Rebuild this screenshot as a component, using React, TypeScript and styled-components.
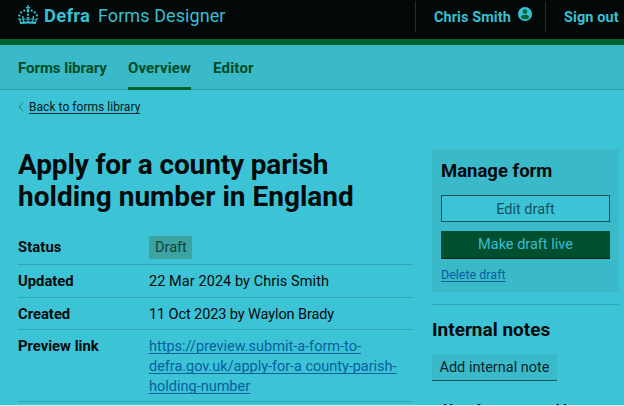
import React from 'react';
import styled, { createGlobalStyle } from 'styled-components';

const c = {
  page: '#3cc4d6',
  panel: '#3ab9c9',
  ink: '#04090b',
  line: '#2fa5b6',
  green: '#00622f',
  navText: '#004d27',
  link: '#06609f',
};

const GlobalStyle = createGlobalStyle`
  *, *::before, *::after { box-sizing: border-box; }
  body { margin: 0; background: #d3f0f5; overflow: hidden; }
`;

const Page = styled.div`
  width: 624px;
  height: 405px;
  overflow: hidden;
  background: ${c.page};
  color: ${c.ink};
  font-family: Roboto, 'Liberation Sans', sans-serif;
  font-size: 14.5px;
  line-height: 20px;
  white-space: nowrap;
`;

/* Text run with optional tracking */
const Run = styled.span<{ $track?: number }>`
  letter-spacing: ${(p) => p.$track ?? 0}px;
`;

const Header = styled.header`
  display: flex;
  height: 45px;
  padding-left: 18px;
  background: #020808;
  border-bottom: 6px solid ${c.green};
  color: #38bfd1;
`;

const Brand = styled.div`
  display: flex;
  flex: 1;
  height: 32px;
  font-size: 18px;
  line-height: 32px;
`;

const Crown = styled.svg`
  width: 20px;
  height: 19px;
  margin: 5px 6px 0 0;
  fill: currentColor;
`;

const BrandName = styled.strong`
  width: 54px;
  font-size: 18.5px;
  font-weight: 700;
`;

const Account = styled.div<{ $width: number }>`
  display: flex;
  width: ${(p) => p.$width}px;
  height: 31px;
  margin-top: 1px;
  padding-left: 18px;
  border-left: 1px solid #1b3338;
  font-weight: 700;
  line-height: 33px;
`;

const Avatar = styled.svg`
  width: 14px;
  height: 14px;
  margin: 6px 0 0 7px;
`;

const Nav = styled.nav`
  display: flex;
  gap: 22px;
  height: 45px;
  padding-left: 18px;
  background: ${c.panel};
  border-bottom: 1px solid #2f9fb0;
`;

const NavItem = styled.a<{ $active?: boolean; $width: number }>`
  width: ${(p) => p.$width}px;
  height: 45px;
  padding-top: 13px;
  border-bottom: 3px solid ${(p) => (p.$active ? c.green : 'transparent')};
  color: ${c.navText};
  font-size: 15px;
  font-weight: 700;
`;

const BackRow = styled.div`
  display: flex;
  align-items: center;
  height: 34px;
  padding-left: 18px;
`;

const Chevron = styled.svg`
  width: 6px;
  height: 10px;
  margin-right: 5px;
  fill: none;
  stroke: #237a88;
`;

const BackLink = styled.a`
  height: 14px;
  border-bottom: 1px solid #0b2c33;
  color: #06181c;
  font-size: 12px;
  letter-spacing: 0.04px;
  line-height: 15px;
`;

const Columns = styled.div`
  display: grid;
  grid-template-columns: 395px 187px;
  column-gap: 19px;
  padding: 25px 0 0 18px;
`;

const Title = styled.h1`
  margin: 0 0 17px;
  font-size: 28px;
  font-weight: 700;
  line-height: 31.5px;
`;

const Summary = styled.dl`
  margin: 0;
`;

const SummaryRow = styled.div<{ $height: number; $top: number }>`
  display: grid;
  grid-template-columns: 131px 1fr;
  height: ${(p) => p.$height}px;
  padding-top: ${(p) => p.$top}px;
  border-bottom: 1px solid ${c.line};
`;

const Key = styled.dt`
  font-weight: 700;
  font-size: 14.8px;
`;

const Value = styled.dd`
  margin: 0;
  padding-top: 1px;
`;

const Tag = styled.span`
  display: flex;
  width: 43px;
  height: 23px;
  margin-top: -2px;
  padding-left: 6px;
  background: #3ca3a0;
  color: #0c4640;
  line-height: 23px;
`;

const Link = styled.a<{ $size?: number }>`
  color: ${c.link};
  font-size: ${(p) => p.$size ?? 14.5}px;
  text-decoration: underline;
  text-decoration-thickness: 1px;
  text-decoration-skip-ink: none;
  text-underline-offset: 2px;
`;

const Panel = styled.section`
  height: 143px;
  padding: 12px 9px 0;
  background: ${c.panel};
`;

const PanelTitle = styled.h2`
  margin: 0 0 14px;
  font-size: 18.5px;
  font-weight: 700;
  line-height: 20px;
`;

const Button = styled.button<{ $primary?: boolean }>`
  display: block;
  width: 169px;
  height: ${(p) => (p.$primary ? 28 : 27)}px;
  margin: 0 0 ${(p) => (p.$primary ? 6 : 9)}px;
  padding: 1px 0 0;
  border: ${(p) => (p.$primary ? '0' : '1px solid #135059')};
  border-bottom: 1px solid ${(p) => (p.$primary ? '#012213' : '#135059')};
  border-radius: 0;
  background: ${(p) => (p.$primary ? '#005030' : c.page)};
  color: ${(p) => (p.$primary ? '#3bbfd0' : '#12525c')};
  font: inherit;
  line-height: 26px;
`;

const Notes = styled.section`
  margin-top: 12px;
  padding-top: 15px;
  border-top: 1px solid ${c.line};
`;

const NotesTitle = styled(PanelTitle)`
  font-size: 19px;
`;

const NoteButton = styled.button`
  display: block;
  width: 125px;
  height: 27px;
  padding: 1px 0 0;
  border: 0;
  border-bottom: 1px solid #14545e;
  border-radius: 0;
  background: ${c.panel};
  color: #07262c;
  font: inherit;
  line-height: 26px;
`;

const NoteEntry = styled.p`
  margin: 20px 0 0 11px;
  font-weight: 700;
`;

export default function App() {
  return (
    <Page>
      <GlobalStyle />
      <Header>
        <Brand>
          <Crown viewBox="0 0 32 30" aria-hidden="true">
            <path d="M22.6 10.4c-1 .4-2-.1-2.4-1-.4-.9.1-2 1-2.4.9-.4 2 .1 2.4 1s-.1 2-1 2.4m-5.9 6.7c-.9.4-2-.1-2.4-1-.4-.9.1-2 1-2.4.9-.4 2 .1 2.4 1s-.1 2-1 2.4m10.8-3.7c-1 .4-2-.1-2.4-1-.4-.9.1-2 1-2.4.9-.4 2 .1 2.4 1s0 2-1 2.4m3.3 4.8c-1 .4-2-.1-2.4-1-.4-.9.1-2 1-2.4.9-.4 2 .1 2.4 1s-.1 2-1 2.4M17 4.7l2.3 1.2V2.5l-2.3.7-.2-.2.9-3h-3.4l.9 3-.2.2c-.1.1-2.3-.7-2.3-.7v3.4L15 4.7c.1.1.1.2.2.2l-1.3 4c-.1.2-.1.4-.1.6 0 1.1.8 2 1.9 2.2h.7c1-.2 1.9-1.1 1.9-2.1 0-.2 0-.4-.1-.6l-1.3-4c-.1-.2 0-.2.1-.3m-7.6 5.7c.9.4 2-.1 2.4-1 .4-.9-.1-2-1-2.4-.9-.4-2 .1-2.4 1s0 2 1 2.4m-5 3c.9.4 2-.1 2.4-1 .4-.9-.1-2-1-2.4-.9-.4-2 .1-2.4 1s.1 2 1 2.4m-3.2 4.8c.9.4 2-.1 2.4-1 .4-.9-.1-2-1-2.4-.9-.4-2 .1-2.4 1s0 2 1 2.4m14.8 11c4.4 0 8.6.3 12.3.8 1.1-4.5 2.4-7 3.7-8.8l-2.5-.9c.2 1.3.3 1.9 0 2.7-.4-.4-.8-1.1-1.1-2.3l-1.2 4c.7-.5 1.3-.8 2-.9-1.1 2.5-2.6 3.1-3.5 3-1.1-.2-1.7-1.2-1.5-2.1.3-1.2 1.5-1.5 2.1-.1 1.1-2.3-.8-3-2-2.3 1.9-1.9 2.1-3.5.6-5.6-2.1 1.6-2.1 3.2-1.2 5.5-1.2-1.4-3.2-.6-2.5 1.6.9-1.4 2.1-.5 1.9.8-.2 1.1-1.7 2.1-3.5 1.9-2.7-.2-2.9-2.1-2.9-3.6.7-.1 1.9.5 2.9 1.9l.4-4.3c-1.1 1.1-2.1 1.4-3.2 1.4.4-1.2 2.1-3 2.1-3h-5.4s1.7 1.9 2.1 3c-1.1 0-2.1-.2-3.2-1.4l.4 4.3c1-1.4 2.2-2 2.9-1.9-.1 1.5-.2 3.4-2.9 3.6-1.9.2-3.4-.8-3.5-1.9-.2-1.3 1-2.2 1.9-.8.7-2.3-1.2-3-2.5-1.6.9-2.2.9-3.9-1.2-5.5-1.5 2-1.3 3.7.6 5.6-1.2-.7-3.1 0-2 2.3.6-1.4 1.8-1.1 2.1.1.2.9-.3 1.9-1.5 2.1-.9.2-2.4-.5-3.5-3 .6 0 1.2.3 2 .9l-1.2-4c-.3 1.1-.7 1.9-1.1 2.3-.3-.8-.2-1.4 0-2.7l-2.9.9C1.3 23 2.6 25.5 3.7 30c3.7-.5 7.9-.8 12.3-.8" />
          </Crown>
          <BrandName><Run $track={0.2}>Defra</Run></BrandName>
          <Run $track={0.08}>Forms Designer</Run>
        </Brand>
        <Account $width={130}>
          <Run $track={0.06}>Chris Smith</Run>
          <Avatar viewBox="0 0 14 14" aria-hidden="true">
            <circle cx="7" cy="7" r="7" fill="#38c2d6" />
            <circle cx="7" cy="4.6" r="2.3" fill={c.green} />
            <ellipse cx="7" cy="10" rx="4" ry="2.2" fill={c.green} />
          </Avatar>
        </Account>
        <Account $width={79}><Run $track={0.1}>Sign out</Run></Account>
      </Header>

      <Nav>
        <NavItem $width={88}><Run $track={-0.04}>Forms library</Run></NavItem>
        <NavItem $width={63} $active><Run $track={0.1}>Overview</Run></NavItem>
        <NavItem $width={42}><Run $track={0.2}>Editor</Run></NavItem>
      </Nav>

      <BackRow>
        <Chevron viewBox="0 0 6 10" aria-hidden="true">
          <path d="M5.2 1 1 5l4.2 4" />
        </Chevron>
        <BackLink>Back to forms library</BackLink>
      </BackRow>

      <Columns>
        <main>
          <Title>
            <Run $track={-0.15}>Apply for a county parish</Run>
            <br />
            <Run>holding number in England</Run>
          </Title>
          <Summary>
            <SummaryRow $height={36} $top={8}>
              <Key><Run $track={0.1}>Status</Run></Key>
              <Value><Tag>Draft</Tag></Value>
            </SummaryRow>
            <SummaryRow $height={33} $top={6}>
              <Key>Updated</Key>
              <Value><Run $track={0.07}>22 Mar 2024 by Chris Smith</Run></Value>
            </SummaryRow>
            <SummaryRow $height={32} $top={6}>
              <Key>Created</Key>
              <Value><Run $track={-0.1}>11 Oct 2023 by Waylon Brady</Run></Value>
            </SummaryRow>
            <SummaryRow $height={72} $top={6}>
              <Key>Preview link</Key>
              <Value>
                <Link>
                  https://preview.submit-a-form-to-
                  <br />
                  <Run $track={-0.03}>defra.gov.uk/apply-for-a county-parish-</Run>
                  <br />
                  holding-number
                </Link>
              </Value>
            </SummaryRow>
          </Summary>
        </main>

        <aside>
          <Panel>
            <PanelTitle>Manage form</PanelTitle>
            <Button>Edit draft</Button>
            <Button $primary>Make draft live</Button>
            <Link $size={12.5}>Delete draft</Link>
          </Panel>
          <Notes>
            <NotesTitle>Internal notes</NotesTitle>
            <NoteButton>Add internal note</NoteButton>
            <NoteEntry>New form created by</NoteEntry>
          </Notes>
        </aside>
      </Columns>
    </Page>
  );
}
